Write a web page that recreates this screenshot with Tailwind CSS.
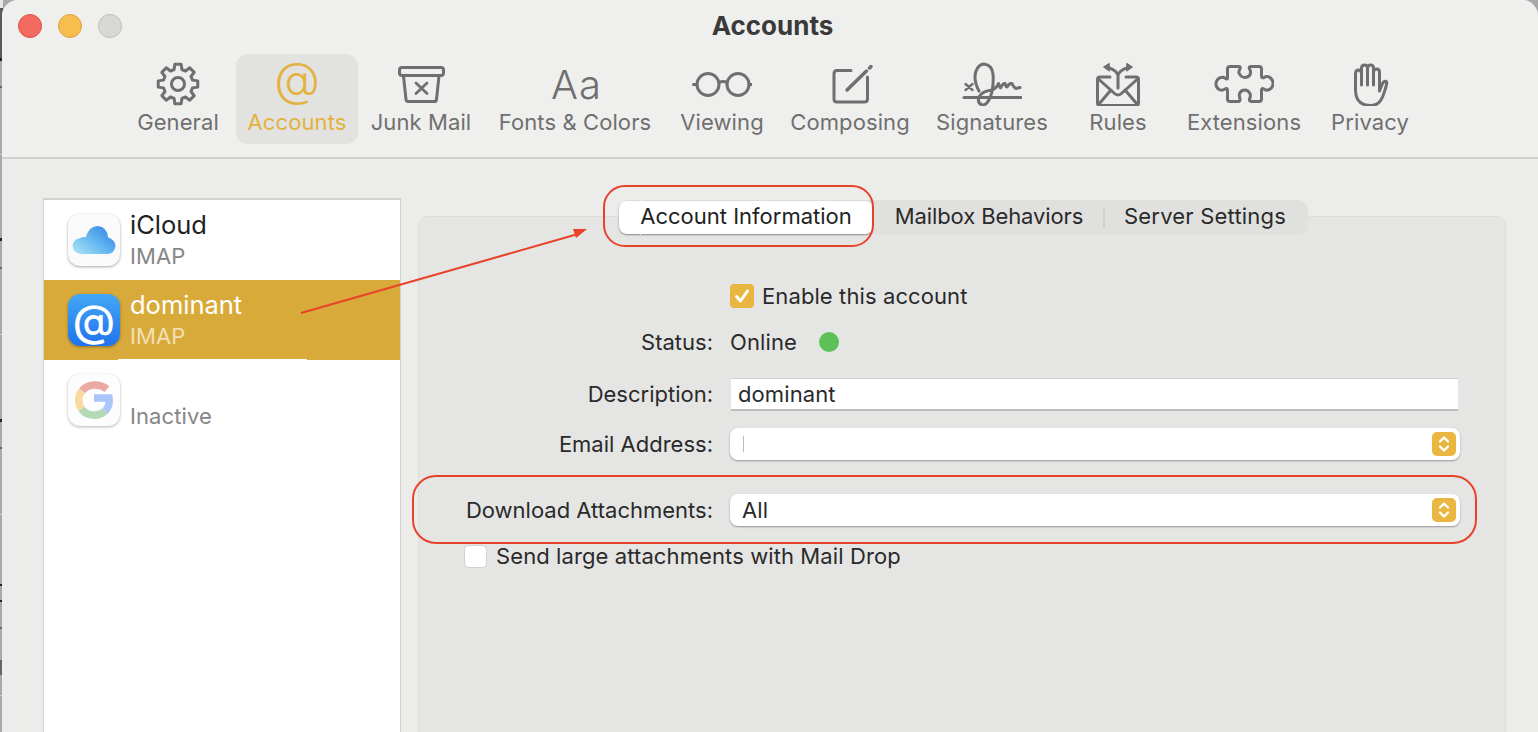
<!DOCTYPE html>
<html>
<head>
<meta charset="utf-8">
<script src="https://cdn.jsdelivr.net/npm/@tailwindcss/browser@4"></script>
</head>
<body class="bg-[#a9a9a9]">
<div class="relative w-[1538px] h-[732px] overflow-hidden bg-[#a9a9a9]">
  <!-- desktop peeking out at the window's left edge -->
  <span class="absolute left-0 top-0 w-[3px] h-[8px] bg-[#e8e8e8]"></span>
  <span class="absolute left-0 top-[8px] w-[3px] h-[50px] bg-[#5a5a5a]"></span>
  <span class="absolute left-0 top-[58px] w-[3px] h-[3px] bg-[#222]"></span>
  <span class="absolute left-0 top-[86px] w-[2px] h-[2px] bg-[#666]"></span>
  <span class="absolute left-0 top-[154px] w-[2px] h-[1px] bg-[#ccc]"></span>
  <span class="absolute left-0 top-[238px] w-[2px] h-[3px] bg-[#222]"></span>
  <span class="absolute left-0 top-[267px] w-[2px] h-[2px] bg-[#666]"></span>
  <span class="absolute left-0 top-[334px] w-[2px] h-[1px] bg-[#ccc]"></span>
  <span class="absolute left-0 top-[419px] w-[2px] h-[3px] bg-[#222]"></span>
  <span class="absolute left-0 top-[447px] w-[2px] h-[2px] bg-[#666]"></span>
  <span class="absolute left-0 top-[514px] w-[2px] h-[1px] bg-[#ccc]"></span>
  <span class="absolute left-0 top-[584px] w-[2px] h-[2px] bg-[#222]"></span>
  <span class="absolute left-0 top-[600px] w-[2px] h-[2px] bg-[#222]"></span>
  <span class="absolute left-0 top-[627px] w-[2px] h-[2px] bg-[#666]"></span>
  <span class="absolute left-0 top-[660px] w-[2px] h-[15px] bg-[#666]"></span>
  <span class="absolute left-0 top-[695px] w-[2px] h-[1px] bg-[#ccc]"></span>

  <div class="relative w-[1536px] h-[732px] overflow-hidden font-['Inter','Liberation_Sans',sans-serif] text-[#2a2a2a] text-[22px] tracking-[0.1px] bg-[#ececeb] ml-[2px] rounded-t-[16px]">
    <!-- title + toolbar -->
    <header class="h-[159px] bg-[#efefee] border-b-2 border-[#cfcfce] flex flex-col">
      <div class="relative h-[54px] flex justify-center pt-[10px]">
        <div class="absolute left-[16px] top-[14px] flex gap-[16px]">
          <span class="w-[24px] h-[24px] rounded-full bg-[#f26a60] border border-[#d9544b]"></span>
          <span class="w-[24px] h-[24px] rounded-full bg-[#f6bd4f] border border-[#dca33c]"></span>
          <span class="w-[24px] h-[24px] rounded-full bg-[#d8d8d7] border border-[#bdbdbc]"></span>
        </div>
        <h1 class="font-bold text-[26px] leading-[32px] text-[#3a3a3a] ml-[5px] tracking-normal">Accounts</h1>
      </div>
      <nav class="flex pl-[118px] text-[#6f6f6f]">
        <div class="w-[116px] h-[90px] flex flex-col items-center">
          <svg class="w-[60px] h-[46px] mt-[6px]" viewBox="0 0 60 46" fill="none" stroke="#6f6f6f" stroke-width="3" stroke-linejoin="round">
            <g transform="translate(30 24)"><path d="M14.49-3.88L19.75-3.13V3.13L14.49 3.88L12.99 7.5L16.18 11.76L11.76 16.18L7.5 12.99L3.88 14.49L3.13 19.75H-3.13L-3.88 14.49L-7.5 12.99L-11.76 16.18L-16.18 11.76L-12.99 7.5L-14.49 3.88L-19.75 3.13V-3.13L-14.49-3.88L-12.99-7.5L-16.18-11.76L-11.76-16.18L-7.5-12.99L-3.88-14.49L-3.13-19.75H3.13L3.88-14.49L7.5-12.99L11.76-16.18L16.18-11.76L12.99-7.5Z"/><circle r="6.5"/></g>
          </svg>
          <span class="leading-[28px] mt-[2px]">General</span>
        </div>
        <div class="w-[122px] h-[90px] flex flex-col items-center bg-[#e2e2e1] rounded-[12px] text-[#e3b23f]">
          <span class="h-[46px] mt-[6px] text-[47px] leading-[38px] font-light">@</span>
          <span class="leading-[28px] mt-[2px]">Accounts</span>
        </div>
        <div class="w-[126px] h-[90px] flex flex-col items-center">
          <svg class="w-[60px] h-[46px] mt-[6px]" viewBox="0 0 60 46" fill="none" stroke="#6f6f6f" stroke-width="3" stroke-linecap="round" stroke-linejoin="round">
            <rect x="8.5" y="7.5" width="44" height="8" rx="2.5"/>
            <path d="M12.5 16L15 39.5Q15.3 41.5 17.5 41.5H43Q45.3 41.5 45.5 39.5L48 16"/>
            <path d="M25 23L36 33.5M36 23L25 33.5" stroke-width="2.8"/>
          </svg>
          <span class="leading-[28px] mt-[2px]">Junk Mail</span>
        </div>
        <div class="w-[182px] h-[90px] flex flex-col items-center">
          <span class="h-[46px] mt-[6px] ml-[3px] text-[40px] leading-[50px] font-light tracking-[1px]">Aa</span>
          <span class="leading-[28px] mt-[2px]">Fonts &amp; Colors</span>
        </div>
        <div class="w-[112px] h-[90px] flex flex-col items-center">
          <svg class="w-[60px] h-[46px] mt-[6px]" viewBox="0 0 60 46" fill="none" stroke="#6f6f6f" stroke-width="3" stroke-linecap="round">
            <circle cx="16" cy="24.5" r="11"/><circle cx="46" cy="24.5" r="11"/>
            <path d="M27 22.5Q31 20.5 35 22.5M5 24.5H1.500M57 24.5H60"/>
          </svg>
          <span class="leading-[28px] mt-[2px]">Viewing</span>
        </div>
        <div class="w-[144px] h-[90px] flex flex-col items-center">
          <svg class="w-[60px] h-[46px] mt-[6px]" viewBox="0 0 60 46" fill="none" stroke="#6f6f6f" stroke-width="3" stroke-linecap="round" stroke-linejoin="round">
            <path d="M31 10.5H17Q14 10.5 14 14V39Q14 42 17 42H44Q47.5 42 47.5 39V17"/>
            <path d="M27 30L46.5 11" stroke-width="3.5"/><path d="M49.5 8L51 6.5" stroke-width="3.5"/>
          </svg>
          <span class="leading-[28px] mt-[2px]">Composing</span>
        </div>
        <div class="w-[140px] h-[90px] flex flex-col items-center">
          <svg class="w-[60px] h-[46px] mt-[6px]" viewBox="0 0 60 46" fill="none" stroke="#6f6f6f" stroke-width="3" stroke-linecap="round" stroke-linejoin="round">
            <path d="M2 37.5H59"/>
            <path d="M3.500 24L10.500 30M10.500 24L3.500 30" stroke-width="2.4"/>
            <path d="M17 31Q11 20 14 11Q17 4 22 4Q30 5 31 14Q32 28 28 38Q24 46 20 45Q15 43 17 37Q20 31 30 30Q35 28 36.5 23.5Q38 28 38.5 28Q41 23 43 23.5Q44 27 45 27Q47 23 50 23.5Q52 28 54 28.5L58 27.5"/>
          </svg>
          <span class="leading-[28px] mt-[2px]">Signatures</span>
        </div>
        <div class="w-[112px] h-[90px] flex flex-col items-center">
          <svg class="w-[60px] h-[46px] mt-[6px]" viewBox="0 0 60 46" fill="none" stroke="#6f6f6f" stroke-width="3" stroke-linecap="round" stroke-linejoin="round">
            <path d="M22 17H12Q9.500 17 9.500 19.500V43Q9.500 45.500 12 45.500H48Q50.500 45.500 50.500 43V19.500Q50.500 17 48 17H38"/>
            <path d="M10.500 19L26 33Q30 37 34 33L49.500 19M11 44L23 30M49 44L37 30"/>
            <path d="M30 28V16Q30 11 20 7.500M30 16Q30 11 40 7.500"/>
            <path d="M21 3.500L15.500 7L21 11ZM39 3.500L44.500 7L39 11Z" fill="#6f6f6f" stroke-width="1"/>
          </svg>
          <span class="leading-[28px] mt-[2px]">Rules</span>
        </div>
        <div class="w-[140px] h-[90px] flex flex-col items-center">
          <svg class="w-[60px] h-[46px] mt-[6px]" viewBox="0 0 60 46" fill="none" stroke="#6f6f6f" stroke-width="3" stroke-linecap="round" stroke-linejoin="round">
            <path d="M13.5 18V9Q13.5 6.5 16 6.5H24.5Q27 6.500 26 9Q24.5 11 25 13Q27 17.5 31 17.5Q36 17 36.5 13Q37 11 35.5 9Q34.5 6.500 37 6.500H45Q47.5 6.5 47.5 9V16Q47.5 18.5 50 17.5Q53 15.5 56 17.5Q59.5 20.5 59 24Q58.5 29 54 30Q51.5 30.5 50 29Q47.5 27.5 47.5 30.5V39Q47.5 41.5 45 41.5H37.5Q35 41.5 35.5 39Q37 36 36 33.5Q34 30 31 30Q27 30 25.5 33.5Q25 36 26 39Q26.5 41.5 24 41.5H16Q13.5 41.5 13.5 39V30.5Q13.5 27.5 11 29Q8 31 5 29.5Q1.5 27 2 23Q3 18.5 7 17.5Q9.5 17 11 18Q13.5 20 13.5 18Z"/>
          </svg>
          <span class="leading-[28px] mt-[2px]">Extensions</span>
        </div>
        <div class="w-[112px] h-[90px] flex flex-col items-center">
          <svg class="w-[60px] h-[46px] mt-[6px]" viewBox="0 0 60 46" fill="none" stroke="#6f6f6f" stroke-width="3" stroke-linecap="round" stroke-linejoin="round">
            <path d="M15.5 30V14Q15.5 10 18.5 10Q21.5 10 21.5 14V25M21.5 25V8Q21.5 5 24.5 5Q27.5 5 27.5 8V25M27.500 25V8Q27.500 5 30.500 5Q33.500 5 33.500 8V25M33.500 25V12Q33.500 9 36.500 9Q39.500 9 39.500 12V31Q42 24 43.500 22Q46.500 20 46.800 23Q46 28 42.500 37Q39 45.500 31 45.500Q15.500 45.500 15.500 30"/>
          </svg>
          <span class="leading-[28px] mt-[2px]">Privacy</span>
        </div>
      </nav>
    </header>

    <main class="flex items-start pl-[41px] pt-[39px] gap-[17px]">
      <!-- account list -->
      <section class="w-[358px] h-[560px] bg-white border-y-2 border-x border-[#d2d2d1] shrink-0">
        <div class="h-[80px] flex items-center gap-[10px] pl-[24px]">
          <div class="w-[52px] h-[52px] rounded-[12px] bg-[#fafafa] shadow-[0_1px_3px_rgba(0,0,0,0.35)] flex items-center justify-center">
            <svg class="w-[44px] h-[28px]" viewBox="0 0 46 30"><defs><linearGradient id="c" x1="0" y1="0.9" x2="1" y2="0.1"><stop offset="0" stop-color="#a9e0f6"/><stop offset="0.5" stop-color="#63b6f0"/><stop offset="1" stop-color="#2f7fe6"/></linearGradient></defs><path fill="url(#c)" d="M9 30Q0 29 0 21Q1 14 8 13Q11 11 14 12Q18 0 27 0Q37 1 38 12Q46 15 46 22Q45 29 38 30Z"/></svg>
          </div>
          <div class="flex flex-col -mt-[1px]">
            <span class="text-[25.5px] leading-[32px] text-[#222] tracking-normal">iCloud</span>
            <span class="text-[22px] leading-[30px] text-[#868686]">IMAP</span>
          </div>
        </div>
        <div class="h-[80px] flex items-center gap-[10px] pl-[24px] bg-[#d8aa3a] relative">
          <div class="w-[52px] h-[52px] rounded-[12px] bg-gradient-to-b from-[#44a7f5] to-[#2272ee] shadow-[0_1px_3px_rgba(0,0,0,0.35)] flex items-center justify-center text-white text-[43px] leading-[50px] font-medium">@</div>
          <div class="flex flex-col -mt-[1px]">
            <span class="text-[25.5px] leading-[32px] text-white tracking-normal">dominant</span>
            <span class="text-[22px] leading-[30px] text-[#f2e0b4]">IMAP</span>
          </div>
          <span class="absolute left-[74px] bottom-0 w-[189px] h-[1px] bg-white"></span>
        </div>
        <div class="h-[80px] flex items-center gap-[10px] pl-[24px]">
          <div class="w-[52px] h-[52px] rounded-[12px] bg-[#fcfdfc] shadow-[0_1px_3px_rgba(0,0,0,0.3)] flex items-center justify-center">
            <svg class="w-[38px] h-[38px]" viewBox="0 0 38 38" fill="none" stroke-width="7.5">
              <path d="M32 8Q26 3.5 19 4Q11 4.5 7 10" stroke="#eaa9a2"/>
              <path d="M7 10Q3.5 14 3.8 19Q3.8 24 6.5 28" stroke="#f8dc9f"/>
              <path d="M6.5 28Q11 34 19 34.2Q26 34 30 30" stroke="#b5d9b6"/>
              <path d="M30 30Q35 25.5 34 17H19" stroke="#a9c5f9"/>
            </svg>
          </div>
          <div class="flex flex-col pt-[31px]">
            <span class="text-[22px] leading-[30px] text-[#868686]">Inactive</span>
          </div>
        </div>
      </section>

      <!-- pane -->
      <section class="relative w-[1088px] h-[560px] mt-[18px] bg-[#e5e5e4] border border-[#dedddc] rounded-t-[10px]">
        <div class="absolute left-[200px] -top-[17px] h-[35px] w-[689px] bg-[#e0e0df] rounded-[10px] flex items-center">
          <span class="relative w-[254px] h-[33px] flex items-center justify-center bg-white rounded-[8px] shadow-[0_1px_2px_rgba(0,0,0,0.4)] text-[#222] tracking-normal pb-[2px]">Account Information<span class="absolute left-[21px] -top-[1px] w-[1px] h-[35px] bg-white/70"></span></span>
          <span class="w-[230px] text-center pl-[2px] pb-[2px] tracking-[-0.1px]">Mailbox Behaviors</span>
          <span class="w-[2px] h-[20px] bg-[#cfcfce]"></span>
          <span class="flex-1 text-center pr-[3px] pb-[2px] tracking-[0.2px]">Server Settings</span>
        </div>
        <div class="pt-[63px] flex flex-col">
          <div class="flex items-center h-[32px] pl-[311px] gap-[8px]">
            <span class="w-[24px] h-[24px] rounded-[4px] bg-[#e9b642] flex items-center justify-center">
              <svg class="w-[16px] h-[16px]" viewBox="0 0 16 16" fill="none" stroke="#fff" stroke-width="3" stroke-linecap="round" stroke-linejoin="round"><path d="M2.5 8.5L6.5 13L13.5 3"/></svg>
            </span>
            <span>Enable this account</span>
          </div>
          <div class="flex items-center h-[32px] mt-[14px] gap-[17px]">
            <span class="w-[294px] text-right tracking-normal">Status:</span>
            <span>Online</span>
            <span class="w-[20px] h-[20px] rounded-full bg-[#5ec157] ml-[5px]"></span>
          </div>
          <div class="flex items-center h-[33px] mt-[20px] gap-[17px]">
            <span class="w-[294px] text-right tracking-normal">Description:</span>
            <span class="ml-[1px] w-[727px] h-[33px] bg-white border-t border-[#cfcfce] border-b-2 border-b-[#bdbdbc] flex items-center pl-[7px]">dominant</span>
          </div>
          <div class="flex items-center h-[32px] mt-[17px] gap-[16px]">
            <span class="w-[294px] text-right tracking-normal">Email Address:</span>
            <span class="ml-[1px] w-[730px] h-[32px] bg-white rounded-[8px] shadow-[0_1px_2px_rgba(0,0,0,0.35)] flex items-center pl-[13px] justify-between pr-[4px]">
              <span class="w-[1px] h-[16px] bg-[#bbb]"></span>
              <span class="w-[24px] h-[24px] rounded-[5px] bg-[#e9b642] flex items-center justify-center">
                <svg class="w-[14px] h-[18px]" viewBox="0 0 14 18" fill="none" stroke="#fff" stroke-width="2.2" stroke-linecap="round" stroke-linejoin="round"><path d="M3 6.5L7 2.5L11 6.5M3 11.5L7 15.5L11 11.5"/></svg>
              </span>
            </span>
          </div>
          <div class="flex items-center h-[32px] mt-[34px] gap-[16px]">
            <span class="w-[294px] text-right tracking-normal">Download Attachments:</span>
            <span class="ml-[1px] w-[730px] h-[32px] bg-white rounded-[8px] shadow-[0_1px_2px_rgba(0,0,0,0.35)] flex items-center pl-[12px] justify-between pr-[4px]">
              <span>All</span>
              <span class="w-[24px] h-[24px] rounded-[5px] bg-[#e9b642] flex items-center justify-center">
                <svg class="w-[14px] h-[18px]" viewBox="0 0 14 18" fill="none" stroke="#fff" stroke-width="2.2" stroke-linecap="round" stroke-linejoin="round"><path d="M3 6.5L7 2.5L11 6.5M3 11.5L7 15.5L11 11.5"/></svg>
              </span>
            </span>
          </div>
          <div class="flex items-center h-[32px] mt-[14px] pl-[45px] gap-[9px]">
            <span class="w-[23px] h-[23px] rounded-[5px] bg-white border border-[#d2d2d1]"></span>
            <span>Send large attachments with Mail Drop</span>
          </div>
        </div>
      </section>
    </main>

    <!-- annotations -->
    <div class="absolute left-[601px] top-[185px] w-[271px] h-[62px] border-2 border-[#e8432a] rounded-[22px]"></div>
    <div class="absolute left-[410px] top-[475px] w-[1065px] h-[69px] border-2 border-[#e8432a] rounded-[24px]"></div>
    <svg class="absolute left-[296px] top-[225px] w-[295px] h-[92px]" viewBox="0 0 295 92" fill="none"><path d="M3 88L280 9" stroke="#e8432a" stroke-width="2"/><path d="M289 4L275 4L278 13Z" fill="#e8432a"/></svg>
  </div>
</div>
</body>
</html>
